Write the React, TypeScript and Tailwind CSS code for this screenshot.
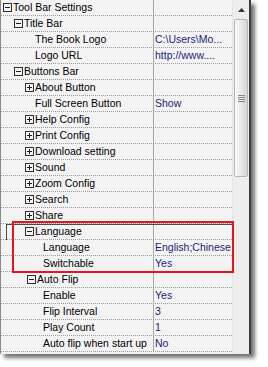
type Row = {
  label: string;
  value?: string;
  box?: "plus" | "minus";
  indent: number;
  focus?: boolean;
};

const rows: Row[] = [
  { label: "Tool Bar Settings", box: "minus", indent: 3 },
  { label: "Title Bar", box: "minus", indent: 14 },
  { label: "The Book Logo", value: "C:\\Users\\Mo...", indent: 35 },
  { label: "Logo URL", value: "http://www....", indent: 35 },
  { label: "Buttons Bar", box: "minus", indent: 14 },
  { label: "About Button", box: "plus", indent: 25 },
  { label: "Full Screen Button", value: "Show", indent: 35 },
  { label: "Help Config", box: "plus", indent: 25 },
  { label: "Print Config", box: "plus", indent: 25 },
  { label: "Download setting", box: "plus", indent: 25 },
  { label: "Sound", box: "plus", indent: 25 },
  { label: "Zoom Config", box: "plus", indent: 25 },
  { label: "Search", box: "plus", indent: 25 },
  { label: "Share", box: "plus", indent: 25 },
  { label: "Language", box: "minus", indent: 25, focus: true },
  { label: "Language", value: "English;Chinese", indent: 43 },
  { label: "Switchable", value: "Yes", indent: 43 },
  { label: "Auto Flip", box: "minus", indent: 27 },
  { label: "Enable", value: "Yes", indent: 43 },
  { label: "Flip Interval", value: "3", indent: 43 },
  { label: "Play Count", value: "1", indent: 43 },
  { label: "Auto flip when start up", value: "No", indent: 43 },
];

function Box({ kind }: { kind: "plus" | "minus" }) {
  return (
    <span className="relative inline-block w-[9px] h-[9px] border border-[#303030] shrink-0 mr-px">
      <span className="absolute left-[1px] top-[3px] w-[5px] h-px bg-[#202020]" />
      {kind === "plus" && (
        <span className="absolute left-[3px] top-[1px] w-px h-[5px] bg-[#202020]" />
      )}
    </span>
  );
}

function PropRow({ row }: { row: Row }) {
  return (
    <div className="relative flex h-4 border-b border-dotted border-[#9a9a9a]">
      {row.focus && (
        <div className="absolute left-[5px] top-0 right-0 h-4 border-t border-l border-[#4a4a4a]" />
      )}
      <div
        className="flex items-center w-[153px] shrink-0 border-r border-[#a8a8a8] overflow-hidden whitespace-nowrap text-black"
        style={{ paddingLeft: row.indent - 1 }}
      >
        {row.box && <Box kind={row.box} />}
        <span>{row.label}</span>
      </div>
      <div className="flex items-center pl-[1px] flex-1 overflow-hidden whitespace-nowrap text-[#1c1c7a]">
        {row.value}
      </div>
    </div>
  );
}

export default function App() {
  return (
    <div className="w-[268px] h-[367px] bg-white relative">
      <div
        className="flex w-[251px] h-[354px] bg-[#f3f3f3] border-l border-[#8a8a8a] border-r-2 border-r-[#3c3c3c] shadow-[4px_4px_4px_rgba(0,0,0,0.55)] overflow-hidden text-[10.5px] leading-none"
        style={{ fontFamily: '"Liberation Sans", Arial, sans-serif' }}
      >
        <div className="w-[231px] shrink-0">
          {rows.map((r, i) => (
            <PropRow key={i} row={r} />
          ))}
        </div>
        <div className="flex-1 flex flex-col bg-[#ededed] border-l border-[#e4e4e4]">
          <div className="h-[19px] flex items-center justify-center">
            <svg width="7" height="4" viewBox="0 0 7 4">
              <path d="M3.5 0 L7 4 L0 4 Z" fill="#333" />
            </svg>
          </div>
          <div className="mx-px h-[158px] rounded-[2px] border border-[#b4b4b4] bg-gradient-to-r from-[#fafafa] via-[#e8e8e8] to-[#d4d4d4] flex items-center justify-center">
            <div className="flex flex-col gap-px">
              <span className="block w-[7px] h-px bg-[#888]" />
              <span className="block w-[7px] h-px bg-[#888]" />
              <span className="block w-[7px] h-px bg-[#888]" />
              <span className="block w-[7px] h-px bg-[#888]" />
            </div>
          </div>
        </div>
      </div>
      <div className="absolute left-[12px] top-[221px] w-[222px] h-[52px] border-2 border-[#e8141c]" />
    </div>
  );
}
